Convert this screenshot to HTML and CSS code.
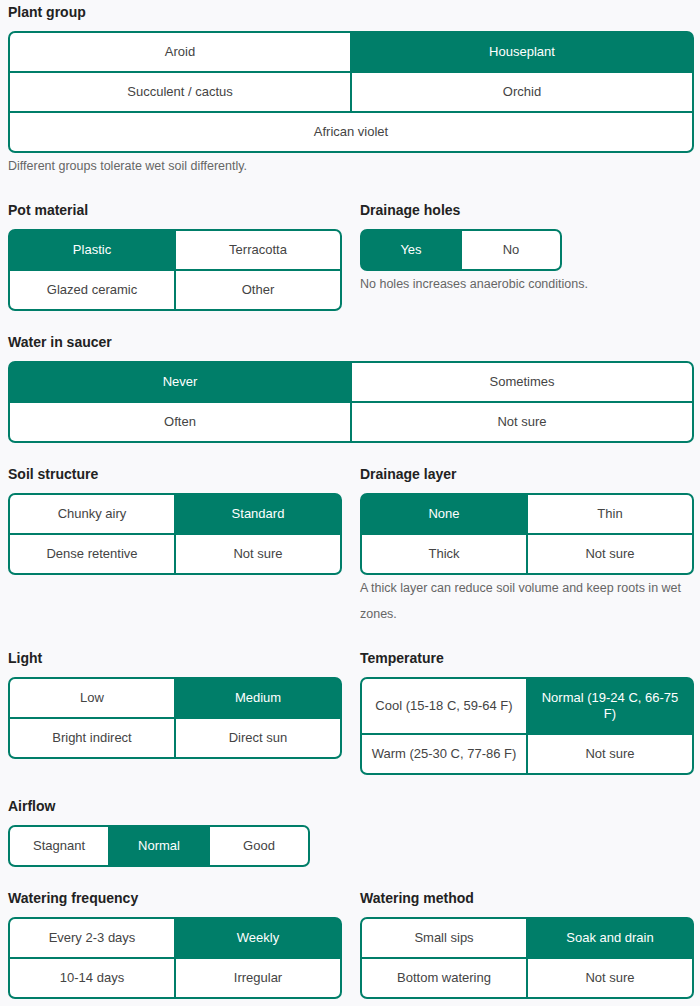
FILE: index.html
```html
<!DOCTYPE html>
<html lang="en">
<head>
  <meta charset="UTF-8" />
  <meta name="viewport" content="width=device-width, initial-scale=1.0"/>
  <title>Plant watering check</title>
  <link rel="stylesheet" href="styles.css">
</head>
<body>
  <form class="form">
    <div class="field full">
      <div class="label">Plant group</div>
      <div class="group grid">
        <button type="button">Aroid</button>
        <button type="button" class="on">Houseplant</button>
        <button type="button">Succulent / cactus</button>
        <button type="button">Orchid</button>
        <button type="button">African violet</button>
      </div>
      <p class="hint">Different groups tolerate wet soil differently.</p>
    </div>

    <div class="field">
      <div class="label">Pot material</div>
      <div class="group grid">
        <button type="button" class="on">Plastic</button>
        <button type="button">Terracotta</button>
        <button type="button">Glazed ceramic</button>
        <button type="button">Other</button>
      </div>
    </div>
    <div class="field">
      <div class="label">Drainage holes</div>
      <div class="group inline">
        <button type="button" class="on">Yes</button>
        <button type="button">No</button>
      </div>
      <p class="hint">No holes increases anaerobic conditions.</p>
    </div>

    <div class="field full">
      <div class="label">Water in saucer</div>
      <div class="group grid">
        <button type="button" class="on">Never</button>
        <button type="button">Sometimes</button>
        <button type="button">Often</button>
        <button type="button">Not sure</button>
      </div>
    </div>

    <div class="field">
      <div class="label">Soil structure</div>
      <div class="group grid">
        <button type="button">Chunky airy</button>
        <button type="button" class="on">Standard</button>
        <button type="button">Dense retentive</button>
        <button type="button">Not sure</button>
      </div>
    </div>
    <div class="field">
      <div class="label">Drainage layer</div>
      <div class="group grid">
        <button type="button" class="on">None</button>
        <button type="button">Thin</button>
        <button type="button">Thick</button>
        <button type="button">Not sure</button>
      </div>
      <p class="hint">A thick layer can reduce soil volume and keep roots in wet zones.</p>
    </div>

    <div class="field">
      <div class="label">Light</div>
      <div class="group grid">
        <button type="button">Low</button>
        <button type="button" class="on">Medium</button>
        <button type="button">Bright indirect</button>
        <button type="button">Direct sun</button>
      </div>
    </div>
    <div class="field">
      <div class="label">Temperature</div>
      <div class="group grid">
        <button type="button">Cool (15-18 C, 59-64 F)</button>
        <button type="button" class="on">Normal (19-24 C, 66-75 F)</button>
        <button type="button">Warm (25-30 C, 77-86 F)</button>
        <button type="button">Not sure</button>
      </div>
    </div>

    <div class="field">
      <div class="label">Airflow</div>
      <div class="group inline">
        <button type="button">Stagnant</button>
        <button type="button" class="on">Normal</button>
        <button type="button">Good</button>
      </div>
    </div>
    <div class="field"></div>

    <div class="field">
      <div class="label">Watering frequency</div>
      <div class="group grid">
        <button type="button">Every 2-3 days</button>
        <button type="button" class="on">Weekly</button>
        <button type="button">10-14 days</button>
        <button type="button">Irregular</button>
      </div>
    </div>
    <div class="field">
      <div class="label">Watering method</div>
      <div class="group grid">
        <button type="button">Small sips</button>
        <button type="button" class="on">Soak and drain</button>
        <button type="button">Bottom watering</button>
        <button type="button">Not sure</button>
      </div>
    </div>
  </form>

  <script>
    // one choice per group
    document.querySelectorAll('.group').forEach(group => {
      group.addEventListener('click', e => {
        const btn = e.target.closest('button');
        if (!btn) return;
        group.querySelectorAll('button').forEach(b => b.classList.remove('on'));
        btn.classList.add('on');
      });
    });
  </script>
</body>
</html>
```

FILE: styles.css
```css
:root {
  --teal: #007e69;
  --bg: #f9f9fb;
  --text: #222;
  --muted: #666;
}

body {
  font-family: 'Liberation Sans', Arial, sans-serif;
  background: var(--bg);
  color: var(--text);
  margin: 0;
  padding: 2px 6px 0 8px;
}

.form {
  width: 686px;
  display: grid;
  grid-template-columns: 1fr 1fr;
  column-gap: 18px;
  row-gap: 21px;
}

.field.full { grid-column: span 2; }

.label {
  font-size: 14px;
  font-weight: bold;
  line-height: 20px;
  margin-bottom: 9px;
}

.group {
  background: var(--teal);
  border: 2px solid var(--teal);
  border-radius: 7px;
  overflow: hidden;
  gap: 2px;
}
.group.grid {
  display: grid;
  grid-template-columns: 1fr 1fr;
}
.group.grid button:last-child:nth-child(odd) { grid-column: span 2; }
.group.inline {
  display: inline-grid;
  grid-auto-flow: column;
  grid-auto-columns: 98px;
}

.group button {
  font-family: inherit;
  font-size: 13px;
  line-height: 16px;
  padding: 11px 8px;
  margin: 0;
  border: none;
  background: #fff;
  color: #444;
  display: flex;
  align-items: center;
  justify-content: center;
  text-align: center;
  cursor: pointer;
}
.group button.on {
  background: var(--teal);
  color: #fff;
}

.hint {
  margin: 0;
  font-size: 12.5px;
  line-height: 26px;
  color: var(--muted);
}
```
